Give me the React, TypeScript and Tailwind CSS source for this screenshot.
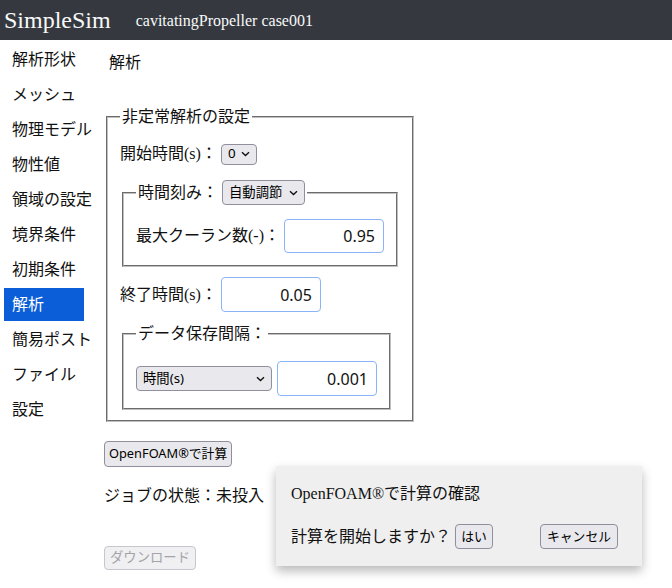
import React from 'react';

const serif = 'font-["Liberation_Serif","Noto_Sans_CJK_JP",serif]';
const sans = 'font-["Noto_Sans","Noto_Sans_CJK_JP",sans-serif]';

const menu = ['解析形状', 'メッシュ', '物理モデル', '物性値', '領域の設定', '境界条件', '初期条件', '解析', '簡易ポスト', 'ファイル', '設定'];

const Chevron = () => (
  <svg width="9" height="6" viewBox="0 0 9 6" className="shrink-0">
    <path d="M1 1.2l3.5 3.3L8 1.2" fill="none" stroke="#111" strokeWidth="1.4" />
  </svg>
);

const FakeSelect = ({ label, className }: { label: string; className: string }) => (
  <div
    className={`flex items-center justify-between rounded-[4px] border border-[#8f8f9d] bg-[#e9e9ed] pl-[6px] pr-[6px] text-[13.333px] text-black ${sans} ${className}`}
  >
    <span className="leading-none">{label}</span>
    <Chevron />
  </div>
);

const NumInput = ({ value, className = '' }: { value: string; className?: string }) => (
  <input
    readOnly
    value={value}
    className={`w-[100px] rounded-[4px] border border-[#8ab4f8] bg-white pr-[8px] text-right text-[16px] text-[#111] outline-none ${sans} ${className}`}
  />
);

const btn = `rounded-[4px] border border-[#8f8f9d] bg-[#e9e9ed] px-[4px] text-[12.8px] text-black ${sans}`;

const fieldsetCls = 'w-fit mx-[2px] border-2 [border-style:groove] border-[#c0c0c0] px-[12px] pt-[6px] pb-[10px]';

export default function App() {
  return (
    <div className={`relative h-[588px] w-[672px] overflow-hidden bg-white text-[16px] text-[#111] ${serif}`}>
      {/* header */}
      <div className="flex h-[40px] items-center bg-[#35393f] px-[4px] text-[#f8f9fa]">
        <span className="text-[24px] leading-none">SimpleSim</span>
        <span className="ml-[25px] mt-[2px] text-[16px] leading-none">cavitatingPropeller case001</span>
      </div>

      <div className="flex">
        {/* sidebar */}
        <div className="w-[104px] shrink-0 pl-[4px] pt-[1px]">
          {menu.map((m) => (
            <div
              key={m}
              className={`mt-[2px] flex h-[33px] w-[80px] items-center whitespace-nowrap px-[8px] leading-none ${
                m === '解析' ? 'bg-[#0b5ed7] text-white' : 'text-[#111]'
              }`}
            >
              {m}
            </div>
          ))}
        </div>

        {/* main */}
        <div className="flex flex-col items-start pt-[11px]">
          <div className="pl-[5px] text-[16px] leading-[24px]">解析</div>

          <fieldset className={`mt-[30px] ${fieldsetCls}`}>
            <legend className="px-[2px] leading-[24px]">非定常解析の設定</legend>

            <div className="mt-[8px] flex h-[22px] items-center">
              <span className="leading-[22px]">開始時間(s)：</span>
              <FakeSelect label="0" className="ml-[4px] h-[21px] w-[36px]" />
            </div>

            <fieldset className={`mt-[15px] ${fieldsetCls}`}>
              <legend className="px-[2px]">
                <span className="flex h-[25px] items-center">
                  <span>時間刻み：</span>
                  <FakeSelect label="自動調節" className="ml-[4px] h-[25px] w-[83px]" />
                </span>
              </legend>
              <div className="mb-[2px] mt-[8px] flex items-center">
                <span>最大クーラン数(-)：</span>
                <NumInput value="0.95" className="ml-[4px] h-[34px]" />
              </div>
            </fieldset>

            <div className="mt-[10px] flex items-center">
              <span>終了時間(s)：</span>
              <NumInput value="0.05" className="ml-[4px] h-[35px]" />
            </div>

            <fieldset className={`mt-[10px] ${fieldsetCls}`}>
              <legend className="px-[2px] leading-[24px]">データ保存間隔：</legend>
              <div className="mb-[2px] mt-[9px] flex items-center">
                <FakeSelect label="時間(s)" className="h-[25px] w-[136px]" />
                <NumInput value="0.001" className="ml-[5px] h-[35px]" />
              </div>
            </fieldset>
          </fieldset>

          <button className={`mt-[19px] h-[26px] ${btn}`}>OpenFOAM®で計算</button>

          <div className="mt-[17px] leading-[24px]">ジョブの状態：未投入</div>

          <button
            disabled
            className={`mt-[38px] h-[24px] rounded-[4px] border border-[#c6c6cf] bg-[#f0f0f3] px-[5px] text-[13.333px] text-[#a3a3a8] ${sans}`}
          >
            ダウンロード
          </button>
        </div>
      </div>

      {/* confirm dialog */}
      <div className="absolute left-[276px] top-[466px] h-[100px] w-[366px] bg-[#efefef] pl-[15px] pt-[16px] shadow-[0_5px_10px_rgba(0,0,0,0.28)]">
        <div className="leading-[24px]">OpenFOAM®で計算の確認</div>
        <div className="mt-[18px] flex h-[25px] items-center">
          <span>計算を開始しますか？</span>
          <button className={`ml-[4px] h-[25px] w-[38px] ${btn}`}>はい</button>
          <button className={`ml-[47px] h-[25px] w-[78px] ${btn}`}>キャンセル</button>
        </div>
      </div>
    </div>
  );
}
